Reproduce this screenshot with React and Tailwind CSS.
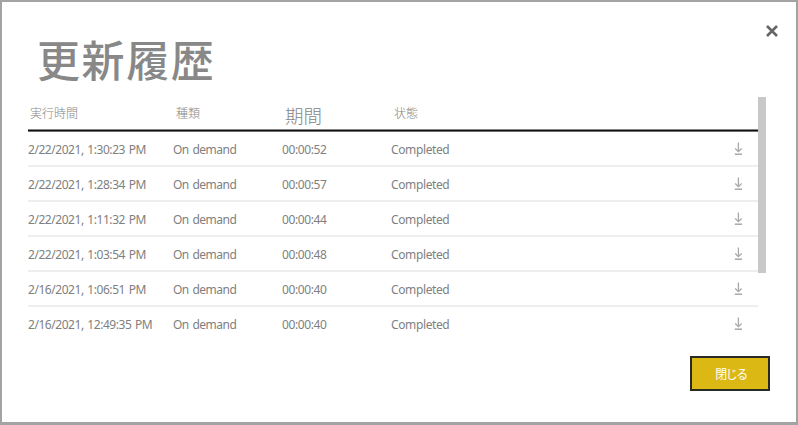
const rows = [
  ["2/22/2021, 1:30:23 PM", "00:00:52"],
  ["2/22/2021, 1:28:34 PM", "00:00:57"],
  ["2/22/2021, 1:11:32 PM", "00:00:44"],
  ["2/22/2021, 1:03:54 PM", "00:00:48"],
  ["2/16/2021, 1:06:51 PM", "00:00:40"],
  ["2/16/2021, 12:49:35 PM", "00:00:40"],
];

const columns = "grid grid-cols-[145px_109px_109px_1fr_40px]";

function DownloadIcon() {
  return (
    <svg width="10" height="14" viewBox="0 0 10 14" fill="none" stroke="#a8a8a8">
      <path d="M5.4 0.5V9.5" strokeWidth="1.3" />
      <path d="M2.2 6.5L5.4 9.6L8.6 6.5" strokeWidth="1.3" />
      <path d="M1.8 12.2H9" strokeWidth="1.5" />
    </svg>
  );
}

function CloseIcon() {
  return (
    <svg width="12" height="12" viewBox="0 0 12 12" fill="none" stroke="#666" strokeWidth="2.6">
      <path d="M1 1L11 11M11 1L1 11" />
    </svg>
  );
}

export default function App() {
  return (
    <div className="flex h-[425px] w-[798px] flex-col overflow-hidden border-2 border-b-[3px] border-[#a3a3a3] bg-white font-['Noto_Sans','Noto_Sans_CJK_JP',sans-serif] text-[#808080]">
      <div className="flex h-[95px] shrink-0 justify-between pr-[18px] pl-[35px]">
        <h1 className="pt-[33px] font-['Noto_Sans_CJK_JP',sans-serif] text-[43px] leading-[46px] font-medium tracking-[1.6px] text-[#888]">
          更新履歴
        </h1>
        <button aria-label="Close" className="mt-[23px] h-3 w-3">
          <CloseIcon />
        </button>
      </div>
      <div className="flex h-[243px] shrink-0 pl-[26px]">
        <div className="w-[730px]">
          <div className={`${columns} mb-px h-[34px] border-b border-[#111] font-['Noto_Sans_CJK_JP',sans-serif] text-xs font-light leading-4 text-[#858585] shadow-[0_1px_0_#6f6f6f,inset_0_-1px_0_#858585]`}>
            <span className="pt-2 pl-[2px]">実行時間</span>
            <span className="pt-2 pl-[3px]">種類</span>
            <span className="pt-[10px] pl-[3px] text-[18.5px]">期間</span>
            <span className="pt-2 pl-[3px]">状態</span>
          </div>
          {rows.map(([time, duration], i) => (
            <div
              key={i}
              className={`${columns} h-[35px] items-center border-b-2 border-[#eeeeee] text-xs whitespace-nowrap last:border-transparent`}
            >
              <span className="pt-[2px] tracking-[-0.45px] [word-spacing:1px]">{time}</span>
              <span className="pt-[2px] tracking-[-0.5px] [word-spacing:1px]">On demand</span>
              <span className="pt-[2px] tracking-[-0.4px]">{duration}</span>
              <span className="pt-[2px] tracking-[-0.38px]">Completed</span>
              <span className="flex justify-center">
                <DownloadIcon />
              </span>
            </div>
          ))}
        </div>
        <div className="h-[176px] w-2 bg-[#c8c8c8]" />
      </div>
      <div className="flex justify-end pt-4 pr-[26px]">
        <button className="h-[35px] w-20 border-2 border-[#292a24] bg-[#dcb815] pl-[2px] font-['Noto_Sans_CJK_JP',sans-serif] text-xs leading-4 tracking-[-1.5px] text-white">
          閉じる
        </button>
      </div>
    </div>
  );
}
